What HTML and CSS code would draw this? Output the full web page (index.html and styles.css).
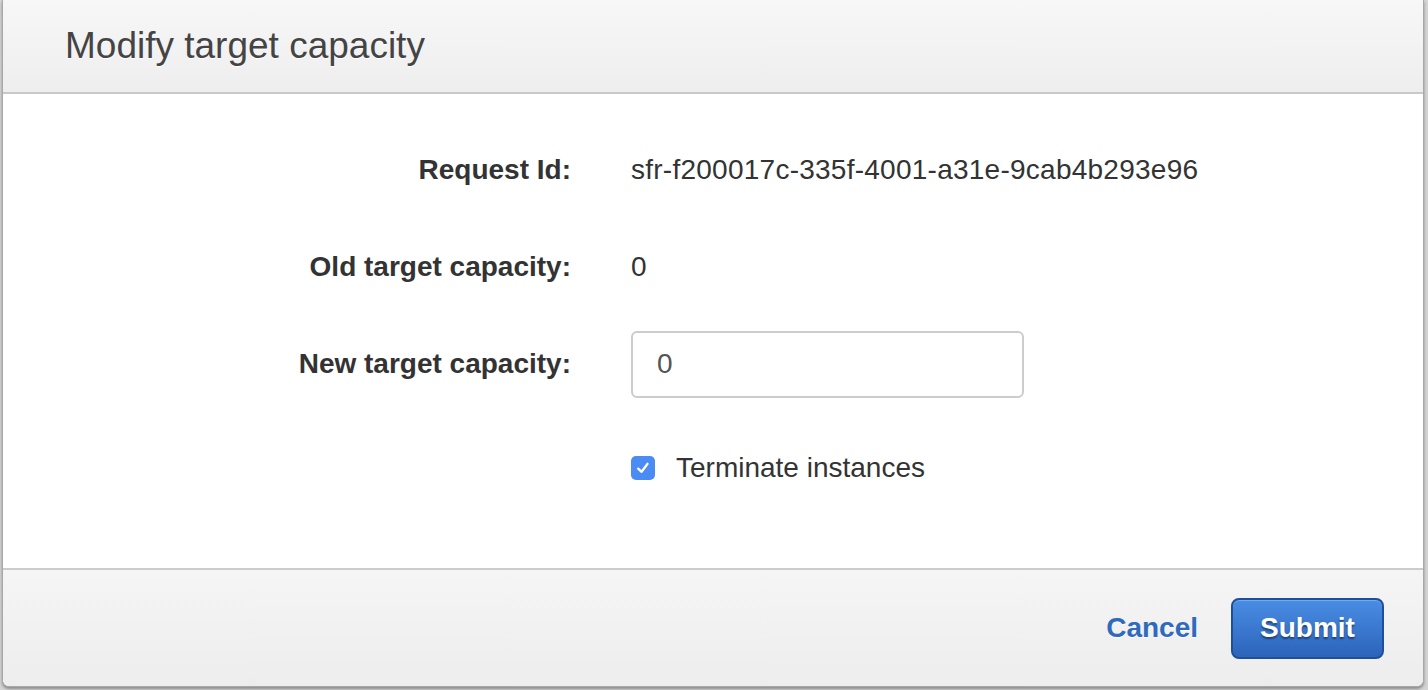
FILE: index.html
```html
<!DOCTYPE html>
<html lang="en">
<head>
<meta charset="utf-8">
<title>Modify target capacity</title>
<link rel="stylesheet" href="styles.css">
</head>
<body>
<div class="dialog">
  <div class="dialog-header">
    <h1 class="dialog-title">Modify target capacity</h1>
  </div>
  <div class="dialog-body">
    <div class="field">
      <div class="label">Request Id:</div>
      <div class="value value-id">sfr-f200017c-335f-4001-a31e-9cab4b293e96</div>
    </div>
    <div class="field">
      <div class="label">Old target capacity:</div>
      <div class="value">0</div>
    </div>
    <div class="field">
      <div class="label">New target capacity:</div>
      <div class="value"><input class="text-input" type="text" value="0"></div>
    </div>
    <div class="field field-check">
      <div class="label"></div>
      <label class="value check">
        <span class="checkbox">
          <svg width="18" height="18" viewBox="0 0 18 18"><path d="M4.2 9.6 L7.6 12.8 L13.6 4.8" fill="none" stroke="#fff" stroke-width="2.3" stroke-linecap="round" stroke-linejoin="round"/></svg>
        </span>
        <span class="check-text">Terminate instances</span>
      </label>
    </div>
  </div>
  <div class="dialog-footer">
    <a class="link-cancel" href="#">Cancel</a>
    <button class="btn-submit" type="button">Submit</button>
  </div>
</div>
</body>
</html>
```
FILE: styles.css
```css
html, body {
  margin: 0;
  padding: 0;
}
body {
  background: #d4d4d4;
  font-family: "Liberation Sans", Arial, Helvetica, sans-serif;
  width: 1428px;
  height: 690px;
  overflow: hidden;
}
.dialog {
  margin-left: 2px;
  width: 1420px;
  border: 1px solid #a8a8a8;
  border-top: none;
  border-radius: 0 0 7px 7px;
  box-shadow: 0 2px 3px rgba(0,0,0,0.35);
  background: #fff;
  overflow: hidden;
}
.dialog-header {
  height: 92px;
  display: flex;
  align-items: center;
  padding-left: 62px;
  background: linear-gradient(#f7f7f7, #eeeeee);
  border-bottom: 2px solid #c9c9c9;
}
.dialog-title {
  margin: 0;
  font-size: 37px;
  font-weight: normal;
  color: #444;
  text-shadow: 0 1px 0 #fff;
}
.dialog-body {
  height: 474px;
  box-sizing: border-box;
  padding-top: 43px;
  display: flex;
  flex-direction: column;
  gap: 31px;
}
.field {
  display: flex;
  align-items: center;
  height: 66px;
  font-size: 28px;
  color: #333;
}
.field-check {
  margin-top: 7px;
}
.label {
  width: 568px;
  text-align: right;
  font-weight: bold;
  color: #333;
}
.value {
  margin-left: 60px;
}
.value-id {
  letter-spacing: 0.25px;
}
.text-input {
  box-sizing: border-box;
  width: 393px;
  height: 67px;
  border: 2px solid #cccccc;
  border-radius: 6px;
  padding: 0 0 0 24px;
  font-family: "Liberation Sans", Arial, sans-serif;
  font-size: 28px;
  color: #555;
  background: #fff;
  outline: none;
}
.check {
  display: flex;
  align-items: center;
}
.checkbox {
  width: 24px;
  height: 24px;
  border-radius: 5px;
  background: #4b8cf4;
  display: flex;
  align-items: center;
  justify-content: center;
}
.check-text {
  margin-left: 21px;
  color: #333;
}
.dialog-footer {
  height: 116px;
  border-top: 2px solid #cccccc;
  background: linear-gradient(#f5f5f5, #ededed);
  display: flex;
  align-items: center;
  justify-content: flex-end;
  padding-right: 39px;
  gap: 33px;
}
.link-cancel {
  font-size: 28px;
  font-weight: bold;
  color: #2f6bbc;
  text-decoration: none;
  text-shadow: 0 1px 0 #fff;
}
.btn-submit {
  width: 153px;
  height: 61px;
  border: 2px solid #1e4f9b;
  border-radius: 8px;
  background: linear-gradient(#4a8de4, #2b64ba);
  color: #fff;
  font-family: "Liberation Sans", Arial, sans-serif;
  font-size: 28px;
  font-weight: bold;
  text-shadow: 0 2px 2px rgba(0,0,0,0.45);
  box-shadow: inset 0 1px 0 rgba(255,255,255,0.25);
  padding: 0;
}
```
